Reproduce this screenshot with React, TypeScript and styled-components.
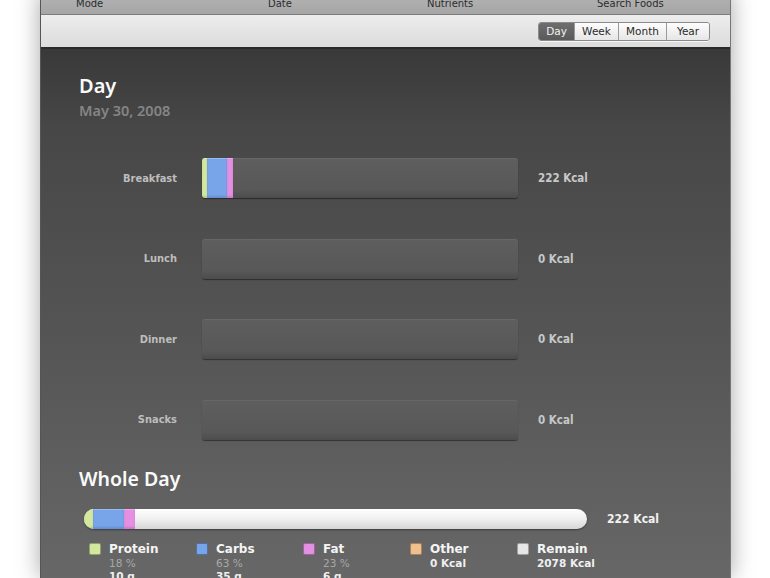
import React from 'react';
import styled, { createGlobalStyle } from 'styled-components';

const GlobalStyle = createGlobalStyle`
  html, body {
    margin: 0;
    padding: 0;
    background: #fff;
    font-family: "DejaVu Sans", Verdana, sans-serif;
  }
`;

const Page = styled.div`
  width: 770px;
  height: 578px;
  overflow: hidden;
  background: #fff;
`;

const Window = styled.div`
  margin-left: 40px;
  margin-top: -8px;
  width: 691px;
  height: 586px;
  display: flex;
  flex-direction: column;
  border-left: 1px solid #555;
  border-right: 1px solid #777;
  box-sizing: border-box;
  box-shadow: 0 0 22px rgba(0, 0, 0, 0.35);
`;

const Header = styled.div`
  flex-shrink: 0;
  height: 23px;
  display: grid;
  grid-template-columns: 192px 159px 170px 1fr;
  padding-left: 35px;
  align-items: center;
  background: linear-gradient(#b4b4b4, #a6a6a6);
  border-bottom: 1px solid #7c7c7c;
  box-sizing: border-box;
`;

const HeaderLabel = styled.span`
  font-size: 10px;
  color: #2c2c2c;
  padding-top: 1px;
`;

const Toolbar = styled.div`
  flex-shrink: 0;
  height: 34px;
  display: flex;
  justify-content: flex-end;
  align-items: center;
  padding-right: 20px;
  background: linear-gradient(#ededed, #dcdcdc);
  border-bottom: 2px solid #2a2a2a;
  box-sizing: border-box;
`;

const Segmented = styled.div`
  display: flex;
  height: 17px;
  border: 1px solid #8a8a8a;
  border-radius: 3px;
  overflow: hidden;
  box-shadow: 0 1px 0 rgba(255, 255, 255, 0.7);
`;

const Segment = styled.div<{ $active?: boolean; $w: number }>`
  width: ${p => p.$w}px;
  display: flex;
  align-items: center;
  justify-content: center;
  font-size: 10.5px;
  color: ${p => (p.$active ? '#f2f2f2' : '#2a2a2a')};
  background: ${p =>
    p.$active ? 'linear-gradient(#6e6e6e, #5a5a5a)' : 'linear-gradient(#fdfdfd, #e6e6e6)'};
  border-left: 1px solid #9a9a9a;
  &:first-child {
    border-left: none;
  }
`;

const Content = styled.div`
  flex: 1;
  min-height: 0;
  overflow: hidden;
  background: linear-gradient(#393939 0%, #474747 15%, #555 55%, #676767 100%);
  padding: 25px 0 0 38px;
  box-sizing: border-box;
`;

const Title = styled.div`
  font-family: "Noto Sans", "DejaVu Sans", sans-serif;
  font-weight: 600;
  font-size: 20px;
  color: #fafafa;
  line-height: 24px;
`;

const SubTitle = styled.div`
  font-family: "Noto Sans", "DejaVu Sans", sans-serif;
  font-weight: 600;
  font-size: 14.5px;
  color: #858585;
  margin-top: 3px;
  line-height: 18px;
`;

const Meals = styled.div`
  display: flex;
  flex-direction: column;
  gap: 40.5px;
  margin-top: 39px;
`;

const MealRow = styled.div`
  display: flex;
  align-items: center;
  height: 40px;
`;

const MealLabel = styled.div`
  width: 98px;
  text-align: right;
  font-family: "DejaVu Sans Condensed", "DejaVu Sans", sans-serif;
  font-weight: bold;
  font-size: 11px;
  color: #bdbdbd;
  margin-right: 25px;
`;

const MealBar = styled.div`
  width: 316px;
  height: 40px;
  display: flex;
  border-radius: 3px;
  overflow: hidden;
  background: linear-gradient(#5e5e5e, #585858 80%, #4c4c4c);
  box-shadow: 0 1px 1px rgba(0, 0, 0, 0.45), inset 0 1px 0 rgba(255, 255, 255, 0.06);
`;

const Seg = styled.div<{ $c: string }>`
  background: ${p => p.$c};
  box-shadow: inset 0 1px 0 rgba(255, 255, 255, 0.25), inset 0 -2px 2px rgba(0, 0, 0, 0.12);
`;

const Kcal = styled.div`
  margin-left: 20px;
  font-family: "DejaVu Sans Condensed", "DejaVu Sans", sans-serif;
  font-weight: bold;
  font-size: 11.5px;
  color: #c8c8c8;
`;

const WholeTitle = styled(Title)`
  font-size: 19.5px;
  margin-top: 27px;
`;

const TotalRow = styled.div`
  display: flex;
  align-items: center;
  margin-top: 18px;
  margin-left: 5px;
`;

const TotalBar = styled.div`
  width: 503px;
  height: 20px;
  display: flex;
  border-radius: 10px;
  overflow: hidden;
  background: linear-gradient(#ffffff, #f0f0f0 50%, #d6d6d6);
  box-shadow: 0 1px 2px rgba(0, 0, 0, 0.4);
`;

const TotalKcal = styled.div`
  margin-left: 20px;
  font-family: "DejaVu Sans Condensed", "DejaVu Sans", sans-serif;
  font-weight: bold;
  font-size: 12px;
  color: #f2f2f2;
`;

const Legend = styled.div`
  display: flex;
  margin-top: 13px;
  margin-left: 10px;
`;

const LegendItem = styled.div`
  width: 107px;
  display: flex;
  gap: 8px;
`;

const Swatch = styled.div<{ $c: string }>`
  width: 12px;
  height: 12px;
  margin-top: 1px;
  border-radius: 2px;
  background: ${p => p.$c};
  border: 1px solid rgba(0, 0, 0, 0.3);
  box-sizing: border-box;
`;

const LegendText = styled.div`
  display: flex;
  flex-direction: column;
`;

const LegendName = styled.div`
  font-size: 12px;
  font-weight: bold;
  color: #f4f4f4;
  line-height: 15px;
`;

const LegendSub = styled.div<{ $light?: boolean }>`
  font-size: 10.5px;
  line-height: 13px;
  color: ${p => (p.$light ? '#f0f0f0' : '#a8a8a8')};
  font-weight: ${p => (p.$light ? 'bold' : 'normal')};
`;

const C = {
  protein: '#d3e89c',
  carbs: '#78a4ea',
  fat: '#e58fe2',
  other: '#efbf8c',
  remain: '#e6e6e6',
};

type Part = [number, string];

const meals: { name: string; kcal: string; segs: Part[] }[] = [
  { name: 'Breakfast', kcal: '222 Kcal', segs: [[5, C.protein], [20, C.carbs], [6, C.fat]] },
  { name: 'Lunch', kcal: '0 Kcal', segs: [] },
  { name: 'Dinner', kcal: '0 Kcal', segs: [] },
  { name: 'Snacks', kcal: '0 Kcal', segs: [] },
];

const legend = [
  { name: 'Protein', c: C.protein, lines: ['18 %', '10 g'] },
  { name: 'Carbs', c: C.carbs, lines: ['63 %', '35 g'] },
  { name: 'Fat', c: C.fat, lines: ['23 %', '6 g'] },
  { name: 'Other', c: C.other, lines: ['0 Kcal'], light: true },
  { name: 'Remain', c: C.remain, lines: ['2078 Kcal'], light: true },
];

const App: React.FC = () => {
  return (
    <Page>
      <GlobalStyle />
      <Window>
        <Header>
          <HeaderLabel>Mode</HeaderLabel>
          <HeaderLabel>Date</HeaderLabel>
          <HeaderLabel>Nutrients</HeaderLabel>
          <HeaderLabel>Search Foods</HeaderLabel>
        </Header>
        <Toolbar>
          <Segmented>
            <Segment $active $w={35}>Day</Segment>
            <Segment $w={43}>Week</Segment>
            <Segment $w={47}>Month</Segment>
            <Segment $w={42}>Year</Segment>
          </Segmented>
        </Toolbar>
        <Content>
          <Title>Day</Title>
          <SubTitle>May 30, 2008</SubTitle>
          <Meals>
            {meals.map(m => (
              <MealRow key={m.name}>
                <MealLabel>{m.name}</MealLabel>
                <MealBar>
                  {m.segs.map(([w, c], i) => (
                    <Seg key={i} $c={c} style={{ width: w }} />
                  ))}
                </MealBar>
                <Kcal>{m.kcal}</Kcal>
              </MealRow>
            ))}
          </Meals>
          <WholeTitle>Whole Day</WholeTitle>
          <TotalRow>
            <TotalBar>
              <Seg $c={C.protein} style={{ width: 9 }} />
              <Seg $c={C.carbs} style={{ width: 31 }} />
              <Seg $c={C.fat} style={{ width: 11 }} />
            </TotalBar>
            <TotalKcal>222 Kcal</TotalKcal>
          </TotalRow>
          <Legend>
            {legend.map(l => (
              <LegendItem key={l.name}>
                <Swatch $c={l.c} />
                <LegendText>
                  <LegendName>{l.name}</LegendName>
                  {l.lines.map((t, i) => (
                    <LegendSub key={t} $light={l.light || i === 1}>{t}</LegendSub>
                  ))}
                </LegendText>
              </LegendItem>
            ))}
          </Legend>
        </Content>
      </Window>
    </Page>
  );
};

export default App;
